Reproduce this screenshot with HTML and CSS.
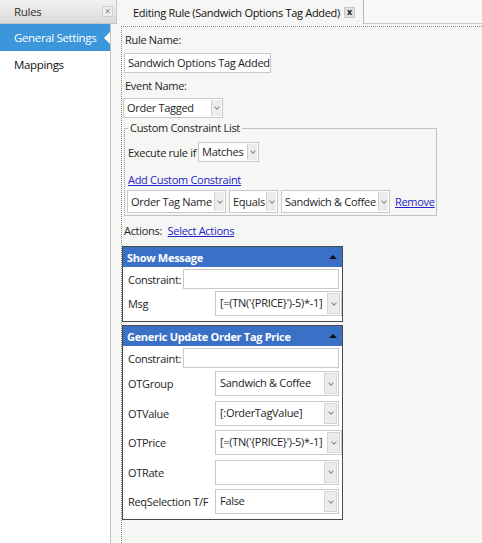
FILE: index.html
```html
<!DOCTYPE html>
<html>
<head>
<meta charset="utf-8">
<link rel="stylesheet" href="styles.css">
</head>
<body>
<div class="app">
  <aside class="sidebar">
    <div class="side-head"><span>Rules</span><span class="xbtn">×</span></div>
    <nav class="side-body">
      <div class="nav-item active">General Settings</div>
      <div class="nav-item">Mappings</div>
    </nav>
  </aside>
  <main class="main">
    <div class="tabs">
      <div class="tab">Editing Rule (Sandwich Options Tag Added) <span class="tab-x">x</span></div>
    </div>
    <div class="editor">
      <div class="lbl">Rule Name:</div>
      <div class="input rule-name">Sandwich Options Tag Added</div>
      <div class="lbl">Event Name:</div>
      <div class="sel small event"><span class="val">Order Tagged</span><span class="arr"></span></div>
      <fieldset class="constraints">
        <legend>Custom Constraint List</legend>
        <div class="exec-row">Execute rule if <div class="sel small matches"><span class="val">Matches</span><span class="arr"></span></div></div>
        <div class="add-row"><a class="link">Add Custom Constraint</a></div>
        <div class="cons-row">
          <div class="sel small c-name"><span class="val">Order Tag Name</span><span class="arr"></span></div>
          <div class="sel small c-op"><span class="val">Equals</span><span class="arr"></span></div>
          <div class="sel small c-val"><span class="val">Sandwich &amp; Coffee</span><span class="arr"></span></div>
          <a class="link">Remove</a>
        </div>
      </fieldset>
      <div class="actions">Actions: <a class="link">Select Actions</a></div>

      <section class="panel">
        <div class="panel-head"><span>Show Message</span><span class="collapse"></span></div>
        <div class="panel-body">
          <div class="crow"><span>Constraint:</span><div class="input cinput"></div></div>
          <div class="prow msg"><span>Msg</span><div class="sel big"><span class="val">[=(TN('{PRICE}')-5)*-1]</span><span class="arr"></span></div></div>
        </div>
      </section>

      <section class="panel">
        <div class="panel-head"><span>Generic Update Order Tag Price</span><span class="collapse"></span></div>
        <div class="panel-body">
          <div class="crow"><span>Constraint:</span><div class="input cinput"></div></div>
          <div class="prow"><span>OTGroup</span><div class="sel big"><span class="val">Sandwich &amp; Coffee</span><span class="arr"></span></div></div>
          <div class="prow"><span>OTValue</span><div class="sel big"><span class="val">[:OrderTagValue]</span><span class="arr"></span></div></div>
          <div class="prow"><span>OTPrice</span><div class="sel big"><span class="val">[=(TN('{PRICE}')-5)*-1]</span><span class="arr"></span></div></div>
          <div class="prow"><span>OTRate</span><div class="sel big"><span class="val"></span><span class="arr"></span></div></div>
          <div class="prow"><span>ReqSelection T/F</span><div class="sel big"><span class="val">False</span><span class="arr"></span></div></div>
        </div>
      </section>
    </div>
  </main>
</div>
</body>
</html>
```

FILE: styles.css
```css
* { box-sizing: border-box; }
html, body { margin: 0; height: 100%; }
body {
  font-family: "Open Sans", "Noto Sans", sans-serif;
  font-size: 11px;
  letter-spacing: -0.3px;
  color: #1e1e1e;
  background: #f6f6f4;
}
.app {
  display: grid;
  grid-template-columns: 117px 1fr;
  height: 543px;
}

/* sidebar */
.sidebar { display: flex; flex-direction: column; }
.side-head {
  height: 24px;
  background: linear-gradient(#f2f2f2, #dadada);
  border-right: 1px solid #c8c8c8;
  border-bottom: 1px solid #c6c6c6;
  display: flex;
  align-items: center;
  justify-content: space-between;
  padding: 0 3px 0 14px;
  font-size: 11.5px;
  color: #333;
}
.xbtn {
  width: 11px; height: 11px;
  border: 1px solid #cfcfcf;
  background: #ededed;
  color: #888;
  font-size: 10px;
  line-height: 8px;
  text-align: center;
  letter-spacing: 0;
}
.side-body {
  flex: 1;
  margin-right: 6px;
  background: #fff;
  border-right: 1px solid #c2c2c2;
  display: flex;
  flex-direction: column;
}
.nav-item {
  height: 27px;
  padding-left: 14px;
  display: flex;
  align-items: center;
  font-size: 11.5px;
  letter-spacing: -0.35px;
  color: #111;
}
.nav-item.active {
  background: #3b96db;
  color: #fff;
  position: relative;
}
.nav-item.active::after {
  content: "";
  position: absolute;
  right: 0;
  top: 50%;
  margin-top: -6px;
  border-top: 6px solid transparent;
  border-bottom: 6px solid transparent;
  border-right: 6px solid #fff;
}

/* main */
.main { display: flex; flex-direction: column; min-width: 0; }
.tabs {
  height: 24px;
  display: flex;
  border-bottom: 1px solid #c8c8c8;
  background: #f8f8f7;
}
.tab {
  height: 24px;
  margin-bottom: -1px;
  padding: 0 8px 0 16px;
  display: flex;
  align-items: center;
  gap: 4px;
  background: #f6f6f4;
  border-right: 1px solid #b8b8b8;
  color: #111;
  white-space: nowrap;
}
.tab-x {
  width: 11px; height: 11px;
  background: #e0e0e0;
  border: 1px solid #c6c6c6;
  font-size: 9px;
  font-weight: bold;
  line-height: 8px;
  text-align: center;
  letter-spacing: 0;
  color: #222;
}
.editor {
  flex: 1;
  margin: 2px 0 0 4px;
  border-top: 1px dotted #8a8a8a;
  border-left: 1px dotted #8a8a8a;
  display: flex;
  flex-direction: column;
  align-items: flex-start;
  padding-top: 3px;
}
.lbl {
  line-height: 20px;
  padding-left: 3px;
}
.input {
  height: 20px;
  background: #fff;
  border: 1px solid #c9c9c9;
  padding: 0 3px;
  line-height: 18px;
  white-space: nowrap;
  overflow: hidden;
}
.rule-name { width: 147px; margin: 3px 0 3px 2px; }

/* select */
.sel {
  display: flex;
  background: #fff;
  border: 1px solid #c9c9c9;
  white-space: nowrap;
}
.sel .val {
  flex: 1;
  overflow: hidden;
  padding: 0 3px;
}
.sel .arr {
  position: relative;
  flex: none;
  background: #ececec;
  border-left: 1px solid #d0d0d0;
}
.sel .arr::after {
  content: "";
  position: absolute;
  left: 50%;
  top: 50%;
  width: 3px; height: 3px;
  margin: -3px 0 0 -2px;
  border-right: 1px solid #888;
  border-bottom: 1px solid #888;
  transform: rotate(45deg);
}
.sel.small { height: 20px; line-height: 18px; }
.sel.small .arr { width: 10px; margin: 1px; }
.event { width: 100px; margin: 2px 0 0 1px; }

.constraints {
  margin: 3px 0 0 2px;
  padding: 5px 3px 2px 2px;
  border: 1px solid #c2c2c2;
  width: 313px;
  min-width: 0;
}
.constraints legend {
  padding: 0 2px;
  margin-left: 1px;
  line-height: 14px;
}
.exec-row {
  display: flex;
  align-items: center;
  gap: 2px;
  height: 24px;
  padding-left: 1px;
}
.matches { width: 61px; height: 24px; line-height: 22px; }
.matches .arr { width: 11px; }
.add-row { line-height: 16px; margin-top: 8px; padding-left: 1px; }
.link { color: #2323c8; text-decoration: underline; cursor: pointer; }
.cons-row {
  display: flex;
  align-items: center;
  gap: 3px;
  margin-top: 2px;
}
.cons-row .sel { height: 23px; line-height: 21px; }
.c-name { width: 99px; }
.c-op { width: 49px; }
.c-val { width: 109px; }
.cons-row .link { margin-left: 2px; }

.actions {
  margin: 7px 0 0 2px;
  line-height: 16px;
}
.actions .link { margin-left: 3px; }

/* panels */
.panel {
  width: 221px;
  border: 1px solid #4a4a4a;
  background: #fff;
  margin-top: 7px;
}
.panel + .panel { margin-top: 3px; }
.panel-head {
  height: 20px;
  background: #3a70c6;
  color: #fff;
  font-weight: bold;
  padding: 0 5px 0 4px;
  display: flex;
  align-items: center;
  justify-content: space-between;
}
.collapse {
  width: 0; height: 0;
  border-left: 4px solid transparent;
  border-right: 4px solid transparent;
  border-bottom: 4px solid #111;
  margin-top: -1px;
}
.panel-body {
  padding: 2px 3px 5px 5px;
  display: flex;
  flex-direction: column;
}
.crow {
  display: flex;
  align-items: center;
  gap: 2px;
}
.cinput { flex: 1; }
.prow {
  display: grid;
  grid-template-columns: 87px 1fr;
  align-items: center;
  margin-top: 4.5px;
}
.crow + .prow { margin-top: 3px; }
.prow.msg { margin-top: 2px; }
.sel.big { height: 25px; line-height: 19px; }
.sel.big .val { padding: 1px 4px 0 4px; }
.sel.big .arr { width: 13px; margin: 1px; border: 1px solid #d6d6d6; }
```
